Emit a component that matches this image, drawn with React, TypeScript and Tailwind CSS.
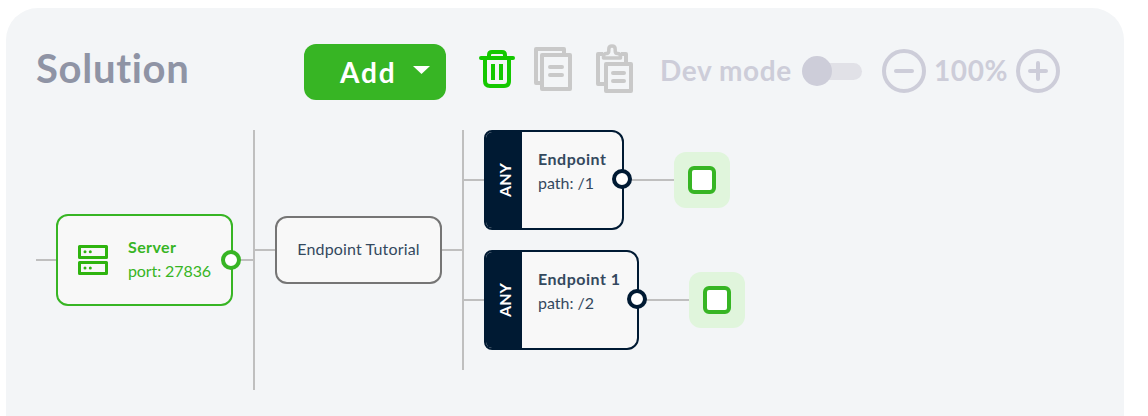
import React from "react";

function TrashIcon() {
  return (
    <svg width="36" height="40" viewBox="0 0 36 40" fill="none" stroke="#14c800" strokeWidth="4">
      <path d="M2 8H34" strokeLinecap="round" />
      <path d="M10 8V5Q10 2 13 2H23Q26 2 26 5V8" />
      <path d="M6 8V31Q6 36 11 36H25Q30 36 30 31V8" />
      <path d="M14 14V30M22 14V30" />
    </svg>
  );
}

function CopyIcon() {
  return (
    <svg width="38" height="44" viewBox="0 0 38 44" fill="none" stroke="#c9c9c9" strokeWidth="4" strokeLinejoin="round">
      <path d="M30 8V2H2V36H7" />
      <rect x="8" y="8" width="28" height="34" />
      <path d="M16 20H28M16 28H28" strokeLinecap="round" />
    </svg>
  );
}

function PasteIcon() {
  return (
    <svg width="38" height="50" viewBox="0 0 38 50" fill="none" stroke="#c9c9c9" strokeWidth="4" strokeLinejoin="round">
      <path d="M7 10H2V40H9M25 10H30V19" />
      <path strokeWidth="3.500" d="M7.500 14V12.500Q7.500 9.500 10.500 9.500Q12.800 9.500 12.800 7V5.200Q12.800 2 16 2Q19.200 2 19.200 5.200V7Q19.200 9.500 21.500 9.500Q24.500 9.500 24.500 12.500V14Z" />
      <rect x="10" y="20" width="25" height="27" />
      <path d="M17 29H28M17 37H28" strokeLinecap="round" />
    </svg>
  );
}

function ZoomIcon({ plus }: { plus?: boolean }) {
  return (
    <svg width="44" height="44" viewBox="0 0 44 44" fill="none" stroke="#cdcdd9" strokeWidth="4">
      <circle cx="22" cy="22" r="20" />
      <path d={plus ? "M14 22H30M22 14V30" : "M14 22H30"} strokeLinecap="round" />
    </svg>
  );
}

function ServerIcon() {
  return (
    <svg width="30" height="30" viewBox="0 0 30 30" fill="none" stroke="#2fb40f" strokeWidth="3" strokeLinejoin="round">
      <rect x="1.500" y="1.500" width="27" height="11" />
      <rect x="1.500" y="17.500" width="27" height="11" />
      <g fill="#2fb40f" stroke="none">
        <circle cx="7" cy="6.700" r="1.500" />
        <circle cx="12.300" cy="6.700" r="1.500" />
        <circle cx="7" cy="23" r="1.500" />
        <circle cx="12.300" cy="23" r="1.500" />
      </g>
    </svg>
  );
}

function Wire({ className }: { className: string }) {
  return <div className={`absolute bg-[#bfbfbf] ${className}`} />;
}

function EndpointNode({ name, path, className }: { name: string; path: string; className: string }) {
  return (
    <div className={`absolute flex h-[100px] overflow-hidden rounded-xl rounded-l-[8px] border-2 border-[#001a33] bg-[#f8f8f8] text-[#34495e] ${className}`}>
      <div className="flex w-9 shrink-0 items-center justify-center bg-[#001a33]">
        <span className="-rotate-90 pt-0.5 text-[16px] font-bold text-white">ANY</span>
      </div>
      <div className="whitespace-nowrap pl-4 pt-[15px] text-[16px] leading-6">
        <div className="font-bold tracking-[0.5px]">{name}</div>
        <div>{path}</div>
      </div>
    </div>
  );
}

function Port({ className }: { className: string }) {
  return <div className={`absolute size-5 rounded-full border-4 bg-white ${className}`} />;
}

function Target({ className }: { className: string }) {
  return (
    <div className={`absolute flex size-14 items-center justify-center rounded-xl bg-[#e0f5dc] ${className}`}>
      <div className="size-7 rounded-[6px] border-4 border-[#37b524] bg-white" />
    </div>
  );
}

export default function App() {
  return (
    <div className="h-[416px] w-[1148px] overflow-hidden bg-white pl-1.5 pt-2 font-['Lato',sans-serif] [font-variant-ligatures:none]">
      <main className="h-[408px] w-[1118px] rounded-t-[32px] bg-[#f3f5f7]">
        <header className="flex h-[122px] items-start pl-[30px] pt-9 font-bold">
          <h1 className="w-[268px] text-[40px] leading-[48px] tracking-[0.7px] text-[#8f94a5]">Solution</h1>
          <button className="flex h-14 w-[142px] items-center rounded-xl bg-[#37b524] pl-9 text-[28px] text-white">
            <span className="w-[73px] text-left tracking-[1.8px]">Add</span>
            <svg width="17" height="8" viewBox="0 0 17 8" className="-mt-1" fill="white"><path d="M0 0H17L8.500 8Z" /></svg>
          </button>
          <div className="ml-[33px] mt-1.5"><TrashIcon /></div>
          <div className="ml-[19px] mt-[3px]"><CopyIcon /></div>
          <div className="ml-6"><PasteIcon /></div>
          <div className="ml-[26px] mt-[5px] flex h-11 items-center text-[28px] text-[#cdcdd9]">
            <span className="-mt-0.5 w-[142px] whitespace-nowrap tracking-[0.6px]">Dev mode</span>
            <div className="flex h-[30px] w-[60px] items-center">
              <div className="z-10 size-[30px] shrink-0 rounded-full bg-[#cdcdd9]" />
              <div className="-ml-[15px] h-[17px] w-[45px] rounded-r-full bg-[#e1e1e7]" />
            </div>
            <div className="ml-5"><ZoomIcon /></div>
            <span className="-mt-0.5 w-[90px] text-center tracking-[0.6px]">100%</span>
            <ZoomIcon plus />
          </div>
        </header>

        <section className="relative h-[286px]">
          <Wire className="left-[30px] top-[129px] h-0.5 w-[217px]" />
          <Wire className="left-[247px] top-0 h-[260px] w-0.5" />
          <Wire className="left-[249px] top-[119px] h-0.5 w-[207px]" />
          <Wire className="left-[456px] top-0 h-[240px] w-0.5" />
          <Wire className="left-[458px] top-[49px] h-0.5 w-[210px]" />
          <Wire className="left-[458px] top-[169px] h-0.5 w-[225px]" />

          <div className="absolute left-[50px] top-[84px] flex h-[92px] w-[177px] items-center rounded-xl border-2 border-[#37b524] bg-[#f8f8f8] pl-5 text-[16px] leading-6 text-[#37b524]">
            <ServerIcon />
            <div className="-mt-0.5 ml-5 whitespace-nowrap">
              <div className="font-bold tracking-[0.4px]">Server</div>
              <div className="tracking-[-0.1px]">port: 27836</div>
            </div>
          </div>
          <Port className="left-[215px] top-[120px] border-[#37b524]" />

          <div className="absolute left-[269px] top-[86px] flex h-[68px] w-[167px] items-center justify-center whitespace-nowrap rounded-xl border-2 border-[#757575] bg-[#f8f8f8] text-[16px] text-[#34495e]">
            <span className="-mt-0.5 tracking-[0.15px]">Endpoint Tutorial</span>
          </div>

          <EndpointNode name="Endpoint" path="path: /1" className="left-[478px] top-0 w-[140px]" />
          <Port className="left-[606px] top-[39px] border-[#001a33]" />
          <Target className="left-[668px] top-[22px]" />

          <EndpointNode name="Endpoint 1" path="path: /2" className="left-[478px] top-[120px] w-[155px]" />
          <Port className="left-[621px] top-[159px] border-[#001a33]" />
          <Target className="left-[683px] top-[142px]" />
        </section>
      </main>
    </div>
  );
}
